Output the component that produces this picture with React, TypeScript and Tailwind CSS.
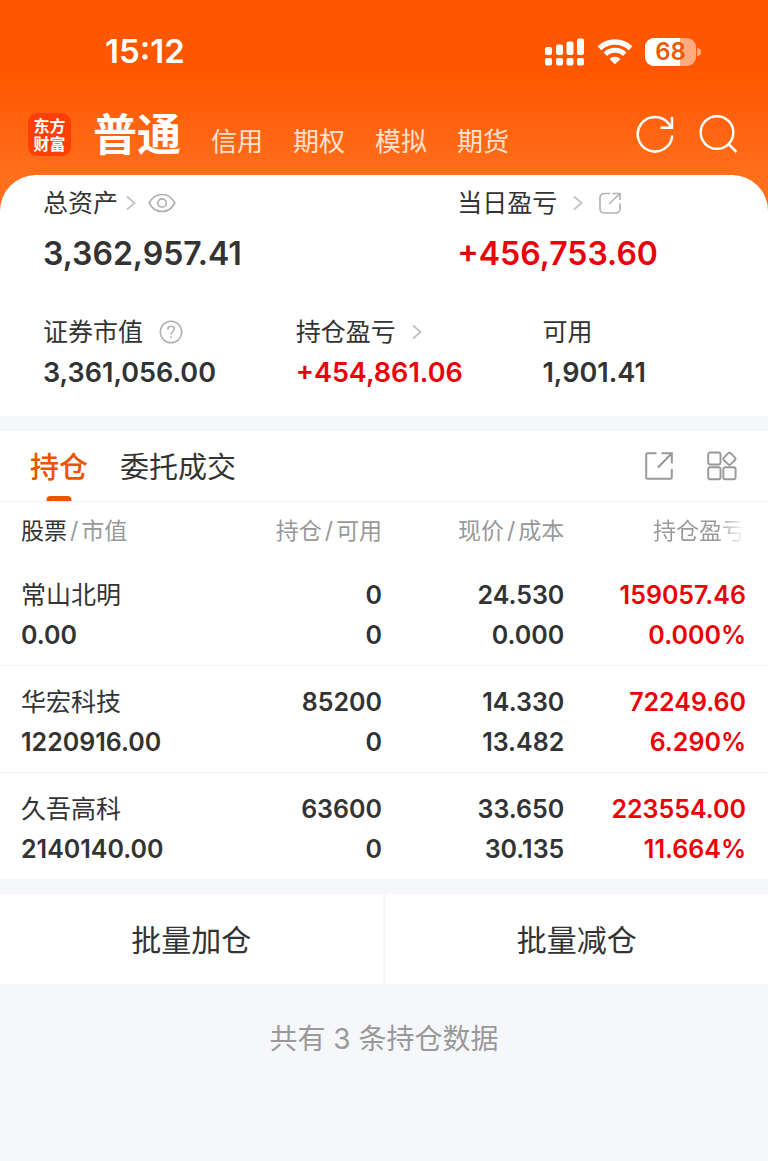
import { useState } from "react"

interface Holding {
  name: string
  marketValue: string
  position: string
  available: string
  price: string
  cost: string
  profit: string
  profitRate: string
}

const ACCOUNTS = ["普通", "信用", "期权", "模拟", "期货"]

const TABS = ["持仓", "委托成交"]

const HOLDINGS: Holding[] = [
  {
    name: "常山北明",
    marketValue: "0.00",
    position: "0",
    available: "0",
    price: "24.530",
    cost: "0.000",
    profit: "159057.46",
    profitRate: "0.000%",
  },
  {
    name: "华宏科技",
    marketValue: "1220916.00",
    position: "85200",
    available: "0",
    price: "14.330",
    cost: "13.482",
    profit: "72249.60",
    profitRate: "6.290%",
  },
  {
    name: "久吾高科",
    marketValue: "2140140.00",
    position: "63600",
    available: "0",
    price: "33.650",
    cost: "30.135",
    profit: "223554.00",
    profitRate: "11.664%",
  },
]

function SignalIcon() {
  return (
    <svg width="40" height="28" viewBox="0 0 40 28" fill="#fff" aria-hidden="true">
      <rect x="0" y="9" width="7" height="8" rx="2" />
      <rect x="11" y="6.500" width="7" height="10.500" rx="2" />
      <rect x="21.500" y="3.500" width="7" height="13.500" rx="2" />
      <rect x="32" y="0.500" width="7" height="16.500" rx="2" />
      <rect x="0" y="20" width="7" height="7.500" rx="2" />
      <rect x="11" y="20" width="7" height="7.500" rx="2" />
      <rect x="21.500" y="20" width="7" height="7.500" rx="2" />
      <rect x="32" y="20" width="7" height="7.500" rx="2" />
    </svg>
  )
}

function WifiIcon() {
  return (
    <svg width="36" height="26" viewBox="0 0 36 26" fill="none" aria-hidden="true">
      <path d="M2.400 9.200a22.600 22.600 0 0 1 31.200 0" stroke="#fff" strokeWidth="5.400" />
      <path d="M8.300 15.300a13.900 13.900 0 0 1 19.400 0" stroke="#fff" strokeWidth="5" />
      <path d="M18 25.300l-5.400-5.400a7.800 7.800 0 0 1 10.800 0z" fill="#fff" />
    </svg>
  )
}

function Battery({ level }: { level: number }) {
  return (
    <div className="flex items-center gap-px">
      <div className="relative flex h-7 w-[51px] items-center justify-center overflow-hidden rounded-[9px] bg-white/50">
        <div className="absolute inset-y-0 left-0 bg-white" style={{ width: `${level}%` }} />
        <span className="relative text-2xl font-semibold text-[#ea5a0c]">{level}</span>
      </div>
      <div className="h-2 w-1 rounded-r-full bg-white/50" />
    </div>
  )
}

function RefreshIcon() {
  return (
    <svg width="40" height="40" viewBox="0 0 40 40" fill="none" stroke="#fff" strokeWidth="2.500" aria-hidden="true">
      <path d="M37.300 21.500A17.300 17.300 0 1 1 34 10l2.400 3.600" />
      <path d="M37 3v10.800H25.500" />
    </svg>
  )
}

function SearchIcon() {
  return (
    <svg width="40" height="40" viewBox="0 0 40 40" fill="none" stroke="#fff" strokeWidth="2.500" aria-hidden="true">
      <circle cx="18" cy="18.500" r="16.300" />
      <path d="M29.500 30l8 8" />
    </svg>
  )
}

function ChevronIcon() {
  return (
    <svg width="10" height="16" viewBox="0 0 10 16" fill="none" stroke="#c4c4c4" strokeWidth="1.800" aria-hidden="true">
      <path d="M1 1.500L8.500 8 1 14.500" />
    </svg>
  )
}

function EyeIcon() {
  return (
    <svg width="28" height="20" viewBox="0 0 28 20" fill="none" stroke="#b0b0b0" strokeWidth="1.700" aria-hidden="true">
      <path d="M1.200 10C4 4.500 8.500 1.500 14 1.500S24 4.500 26.800 10C24 15.500 19.500 18.500 14 18.500S4 15.500 1.200 10z" />
      <circle cx="14" cy="10" r="4.200" />
    </svg>
  )
}

function ShareIcon() {
  return (
    <svg width="22" height="22" viewBox="0 0 22 22" fill="none" stroke="#b4b4b4" strokeWidth="1.700" aria-hidden="true">
      <path d="M11 1.500H5a4 4 0 0 0-4 4V17a4 4 0 0 0 4 4h12a4 4 0 0 0 4-4v-5.500" />
      <path d="M13.500 1.500H21V8M21 1.500L10 12" />
    </svg>
  )
}

function HelpIcon() {
  return (
    <svg width="24" height="24" viewBox="0 0 24 24" fill="none" stroke="#b4b4b4" strokeWidth="1.600" aria-hidden="true">
      <circle cx="12" cy="12" r="10.700" />
      <path d="M8.800 9.600c0-2 1.300-3.300 3.200-3.300s3.200 1.200 3.200 2.900c0 2.400-3.200 2.600-3.200 5.200" />
      <path d="M12 16.200v1.800" />
    </svg>
  )
}

function ExportIcon() {
  return (
    <svg width="28" height="28" viewBox="0 0 28 28" fill="none" stroke="#999" strokeWidth="2" aria-hidden="true">
      <path d="M11.500 1.200H2.500a1.300 1.300 0 0 0-1.300 1.300v23a1.300 1.300 0 0 0 1.300 1.300h23a1.300 1.300 0 0 0 1.300-1.300V17" />
      <path d="M16.500 1.200h10.300v10.300M26.800 1.200L13 15.500" />
    </svg>
  )
}

function WidgetsIcon() {
  return (
    <svg width="30" height="30" viewBox="0 0 30 30" fill="none" stroke="#999" strokeWidth="1.900" aria-hidden="true">
      <rect x="1.200" y="1.500" width="12.300" height="12" rx="2" />
      <rect x="1.200" y="16.300" width="12.300" height="12" rx="2" />
      <rect x="16.300" y="16.300" width="12.300" height="12" rx="2" />
      <rect x="17.600" y="3" width="9.600" height="9.600" rx="2" transform="rotate(45 22.400 7.800)" />
    </svg>
  )
}

export default function App() {
  const [account, setAccount] = useState("普通")
  const [tab, setTab] = useState("持仓")

  return (
    <div className="min-h-screen bg-[#f6f7fa] font-[Inter,'Noto_Sans_CJK_SC',sans-serif] text-[#333]">
      <div className="bg-[linear-gradient(#ff5600_70px,#ff6f1c_176px)]">
        {/* Status bar */}
        <div className="flex h-[104px] items-center justify-between pr-[67px] pl-[105px]">
          <span className="text-[33px] font-semibold text-white">15:12</span>
          <div className="flex items-center gap-3">
            <SignalIcon />
            <WifiIcon />
            <Battery level={68} />
          </div>
        </div>

        {/* Account switcher */}
        <header className="flex h-[71px] items-start justify-between pr-[29px] pl-7">
          <div className="flex gap-[22px]">
            <div className="mt-[9px] flex size-[43px] flex-col items-center justify-center rounded-[9px] bg-[#ff3f06] text-base leading-[18px] font-bold text-white">
              <span>东方</span>
              <span>财富</span>
            </div>
            <nav className="flex items-baseline gap-[30px] leading-[62px]">
              {ACCOUNTS.map((name) => (
                <button
                  key={name}
                  type="button"
                  onClick={() => setAccount(name)}
                  className={name === account ? "text-[44px] font-bold text-white" : "text-[26px] text-white/80"}
                >
                  {name}
                </button>
              ))}
            </nav>
          </div>
          <div className="mt-[10px] flex gap-6">
            <button type="button" aria-label="刷新">
              <RefreshIcon />
            </button>
            <button type="button" aria-label="搜索">
              <SearchIcon />
            </button>
          </div>
        </header>

        {/* Asset summary */}
        <section className="rounded-t-[36px] bg-white px-[43px] pt-3 pb-[27px] text-[25px] leading-8">
          <div className="grid grid-cols-[413fr_267fr]">
            <div>
              <div className="flex h-8 items-center gap-2">
                总资产
                <ChevronIcon />
                <button type="button" aria-label="隐藏资产" className="ml-1">
                  <EyeIcon />
                </button>
              </div>
              <div className="mt-4 text-[32px] leading-[38px] font-semibold">3,362,957.41</div>
            </div>
            <div>
              <div className="flex h-8 items-center gap-4">
                当日盈亏
                <ChevronIcon />
                <button type="button" aria-label="分享">
                  <ShareIcon />
                </button>
              </div>
              <div className="mt-4 text-[32px] leading-[38px] font-semibold text-[#eb0007]">+456,753.60</div>
            </div>
          </div>

          <div className="mt-[43px] grid grid-cols-[252fr_246fr_182fr]">
            <div>
              <div className="flex h-8 items-center gap-4">
                证券市值
                <button type="button" aria-label="说明">
                  <HelpIcon />
                </button>
              </div>
              <div className="mt-[9px] text-[27px] font-semibold">3,361,056.00</div>
            </div>
            <div>
              <div className="flex h-8 items-center gap-4">
                持仓盈亏
                <ChevronIcon />
              </div>
              <div className="mt-[9px] text-[27px] font-semibold text-[#eb0007]">+454,861.06</div>
            </div>
            <div>
              <div className="flex h-8 items-center">可用</div>
              <div className="mt-[9px] text-[27px] font-semibold">1,901.41</div>
            </div>
          </div>
        </section>
      </div>

      {/* Holdings */}
      <section className="mt-[15px] bg-white">
        <div className="flex h-[71px] items-center justify-between border-b border-[#f3f3f5] pr-[31px] pl-[30px]">
          <div role="tablist" className="flex h-full gap-8 text-[29px]">
            {TABS.map((name) => (
              <button
                key={name}
                type="button"
                role="tab"
                aria-selected={name === tab}
                onClick={() => setTab(name)}
                className={`relative pt-[3px] ${name === tab ? "font-medium text-[#ea5504]" : ""}`}
              >
                {name}
                {name === tab && (
                  <span className="absolute bottom-0 left-1/2 h-[5px] w-[25px] -translate-x-1/2 rounded-t-sm bg-[#ea5504]" />
                )}
              </button>
            ))}
          </div>
          <div className="flex items-center gap-[34px]">
            <button type="button" aria-label="导出">
              <ExportIcon />
            </button>
            <button type="button" aria-label="更多功能">
              <WidgetsIcon />
            </button>
          </div>
        </div>

        <table className="w-full table-fixed text-right">
          <thead>
            <tr className="h-14 text-[23px] text-[#999]">
              <th className="w-[25%] pt-[3px] pl-[21px] text-left font-normal">
                <span className="text-[#333]">股票</span>
                <span className="mx-[3px]">/</span>市值
              </th>
              <th className="w-[25%] pt-[3px] pr-[2px] font-normal">
                持仓<span className="mx-[3px]">/</span>可用
              </th>
              <th className="w-[24%] pt-[3px] pr-1 font-normal">
                现价<span className="mx-[3px]">/</span>成本
              </th>
              <th className="w-[26%] pt-[3px] pr-[23px] font-normal">
                <span className="bg-linear-to-r from-[#999] from-70% to-transparent bg-clip-text text-transparent">
                  持仓盈亏
                </span>
              </th>
            </tr>
          </thead>
          <tbody className="text-[25px] leading-10 font-semibold">
            {HOLDINGS.map((item) => (
              <tr key={item.name} className="h-[107px] border-b border-[#f3f3f5] last:border-b-0">
                <td className="pt-[7px] pl-[21px] text-left">
                  <div className="font-normal">{item.name}</div>
                  <div>{item.marketValue}</div>
                </td>
                <td className="pt-[7px] pr-[2px]">
                  <div>{item.position}</div>
                  <div>{item.available}</div>
                </td>
                <td className="pt-[7px] pr-1">
                  <div>{item.price}</div>
                  <div>{item.cost}</div>
                </td>
                <td className="pt-[7px] pr-[22px] text-[#eb0007]">
                  <div>{item.profit}</div>
                  <div>{item.profitRate}</div>
                </td>
              </tr>
            ))}
          </tbody>
        </table>
      </section>

      {/* Batch actions */}
      <div className="mt-[15px] grid grid-cols-2 gap-[3px] text-[30px]">
        <button type="button" className="h-[90px] bg-white pt-[2px]">
          批量加仓
        </button>
        <button type="button" className="h-[90px] bg-white pt-[2px]">
          批量减仓
        </button>
      </div>

      <p className="pt-[33px] text-center text-[28px] leading-[44px] text-[#999]">共有 {HOLDINGS.length} 条持仓数据</p>
    </div>
  )
}
